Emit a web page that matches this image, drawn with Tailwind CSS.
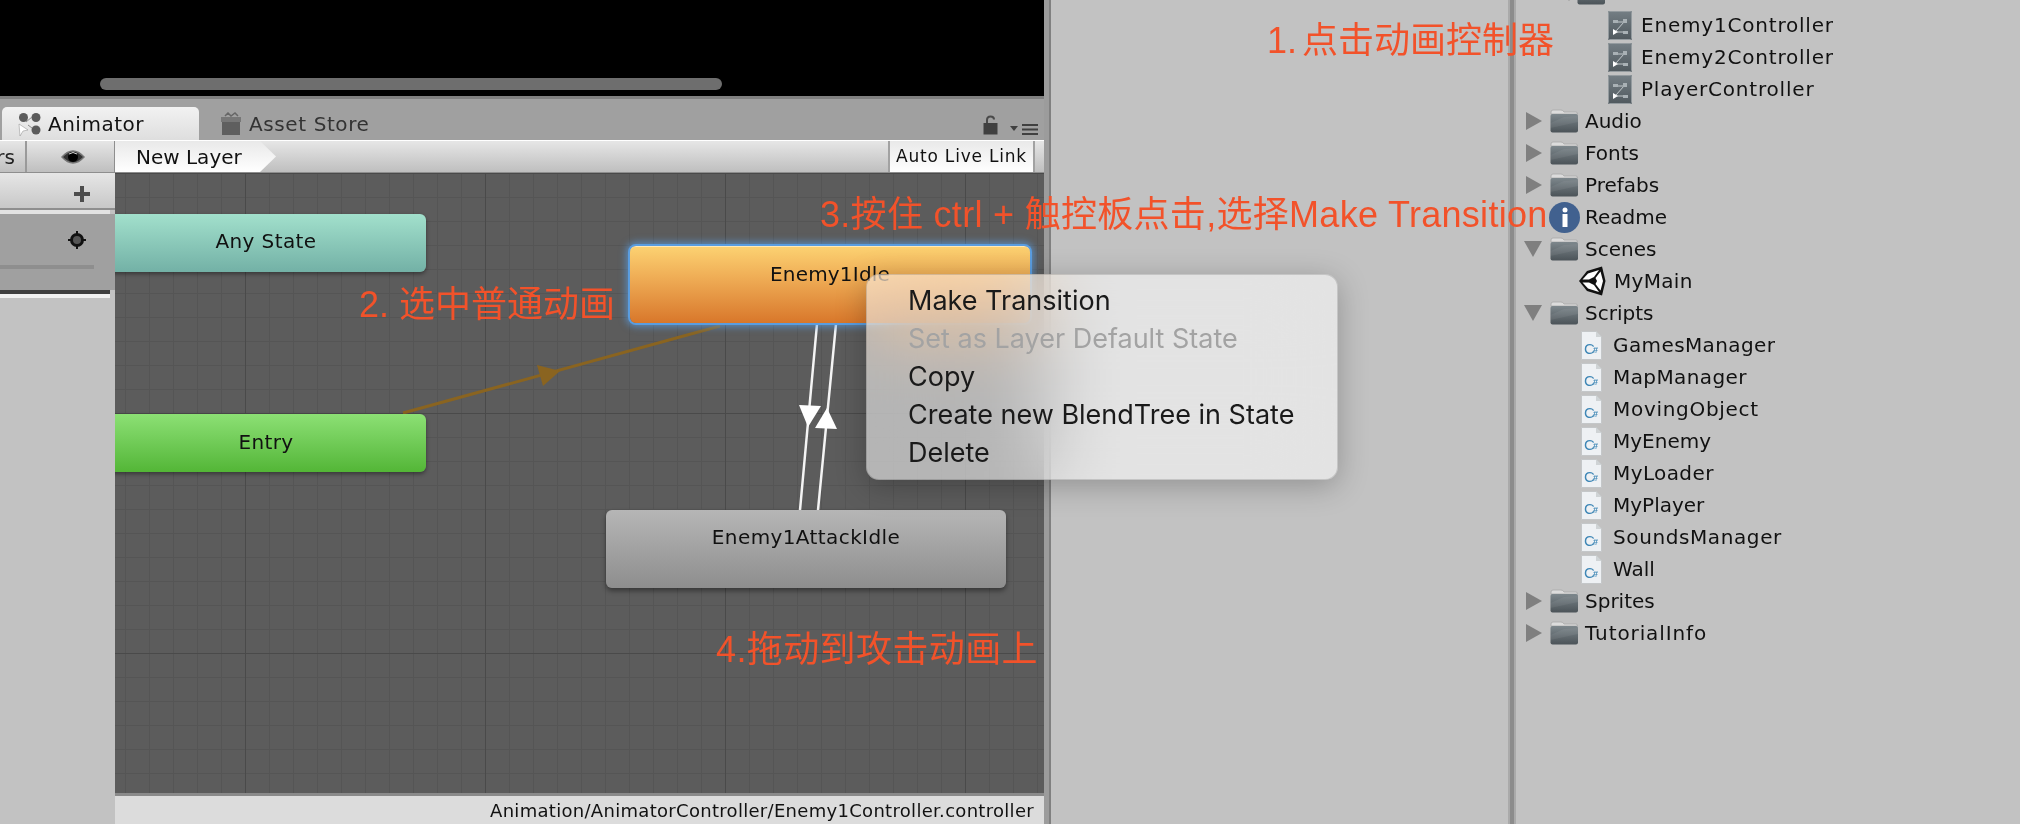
<!DOCTYPE html>
<html lang="en">
<head>
    <meta charset="utf-8">
    <script src="https://cdn.jsdelivr.net/npm/@tailwindcss/browser@4"></script>
    <title>Animator</title>
</head>
<body class="bg-[#c2c2c2]">

<svg class="absolute h-0 w-0">
    <defs>
        <linearGradient id="folderFill" x1="0" y1="0" x2="0" y2="1">
            <stop offset="0" stop-color="#7d878c"/>
            <stop offset="1" stop-color="#4b5358"/>
        </linearGradient>
        <linearGradient id="ctrlFill" x1="0" y1="0" x2="0" y2="1">
            <stop offset="0" stop-color="#747e84"/>
            <stop offset="1" stop-color="#50595e"/>
        </linearGradient>
    </defs>
    <symbol id="folder" viewBox="0 0 28 24">
        <path d="M1 5 L1 3 Q1 1 3 1 L11 1 Q13 1 14 3 L26 3 Q27.500 3 27.500 5 L1 5Z" fill="#dcdcdc" stroke="#a8a8a8" stroke-width="0.800"/>
        <rect x="0.500" y="5" width="27.500" height="18.500" rx="2" fill="url(#folderFill)"/>
        <path d="M0.500 14 L14 8 L28 7 L28 13 L0.500 19Z" fill="#ffffff" fill-opacity="0.060"/>
    </symbol>
    <symbol id="controller" viewBox="0 0 24 29">
        <rect x="0" y="0" width="24" height="29" rx="1" fill="url(#ctrlFill)"/>
        <rect x="0.500" y="0.500" width="23" height="28" rx="1" fill="none" stroke="#949b9f"/>
        <path d="M9 11 H16 M16 11 L8 20 M9 21 H16" stroke="#c4cacd" stroke-width="1"/>
        <rect x="5" y="9" width="5" height="3" fill="#a9b1b5"/>
        <rect x="15" y="8" width="4" height="4" fill="#a9b1b5"/>
        <rect x="15" y="20" width="5" height="3" fill="#a9b1b5"/>
        <path d="M5 18 L10 21 L5 24Z" fill="#ffffff"/>
    </symbol>
    <symbol id="paper" viewBox="0 0 21 29">
        <path d="M0.500 0.500 H15 L20.500 6 V28.500 H0.500Z" fill="#eef1f4" stroke="#c4c7c9"/>
        <path d="M15 0.500 L20.500 6 H15Z" fill="#cfd3d5"/>
    </symbol>
    <symbol id="arrowRight" viewBox="0 0 16 18">
        <path d="M0 0 L16 9 L0 18Z" fill="#7f7f7f"/>
    </symbol>
    <symbol id="arrowDown" viewBox="0 0 18 16">
        <path d="M0 0 H18 L9 16Z" fill="#7f7f7f"/>
    </symbol>
</svg>

<div class="relative flex h-[824px] w-[2020px] overflow-hidden bg-[#c2c2c2] font-['DejaVu_Sans',sans-serif] text-[#111]">

    <!-- animator window -->
    <div class="flex w-[1044px] shrink-0 flex-col">
        <div class="h-[96px] bg-black pl-[100px] pt-[78px]">
            <div class="h-[12px] w-[622px] rounded-full bg-[#6e6e6e]"></div>
        </div>

        <div class="flex h-[44px] items-end border-t-[3px] border-[#808080] bg-[#a0a0a0] pl-[2px]">
            <div class="flex h-[33px] w-[197px] items-center gap-[6px] rounded-t-[5px] bg-linear-to-b from-[#f2f2f2] to-[#dedede] pl-[16px] text-[20px] tracking-[0.5px]">
                <svg class="h-[24px] w-[24px]" viewBox="0 0 24 24">
                    <circle cx="5.500" cy="5.500" r="4.500" fill="#5b5b5b"/>
                    <circle cx="18" cy="5.500" r="4.500" fill="#5b5b5b"/>
                    <circle cx="18" cy="18" r="4.500" fill="#5b5b5b"/>
                    <path d="M1 12 L10 18 L5 19 L2 24Z" fill="#ffffff" stroke="#8a8a8a" stroke-width="0.500"/>
                    <path d="M8 10 L14 5 M10 13 L14 16" stroke="#8a8a8a" stroke-width="1"/>
                </svg>
                <span>Animator</span>
            </div>
            <div class="ml-[21px] flex h-[33px] items-center gap-[7px] text-[20px] tracking-[0.6px] text-[#333]">
                <svg class="h-[24px] w-[22px]" viewBox="0 0 22 24">
                    <path d="M5 4 L8 1 L11 4 L15 1 L18 4" fill="none" stroke="#666" stroke-width="1.500"/>
                    <rect x="1" y="5" width="20" height="5" fill="#777"/>
                    <rect x="2" y="10" width="18" height="13" fill="#5f5f5f"/>
                </svg>
                <span>Asset Store</span>
            </div>
            <div class="ml-auto mr-[6px] flex h-[40px] items-end gap-[12px] pb-[5px]">
                <svg class="h-[20px] w-[15px]" viewBox="0 0 15 20">
                    <path d="M4 8 V5 Q4 1.500 7.500 1.500 Q11 1.500 11 4.500" fill="none" stroke="#4a4a4a" stroke-width="2"/>
                    <rect x="0.500" y="8" width="14" height="11.500" fill="#404040"/>
                </svg>
                <svg class="h-[11px] w-[28px]" viewBox="0 0 28 11">
                    <path d="M0 2 H8 L4 7Z" fill="#404040"/>
                    <path d="M12 1 H28 M12 5.500 H28 M12 10 H28" stroke="#404040" stroke-width="2"/>
                </svg>
            </div>
        </div>

        <div class="flex h-[33px] items-stretch border-y-[1px] border-t-white border-b-[#8e8e8e] bg-linear-to-b from-[#e6e6e6] to-[#bfbfbf] text-[20px]">
            <div class="flex w-[115px] shrink-0 items-center overflow-hidden border-r border-[#8e8e8e]">
                <div class="flex h-full w-[27px] items-center justify-end border-r-2 border-[#9a9a9a] pr-[10px] text-[20px] text-[#222]">rs</div>
                <svg class="ml-[34px] h-[18px] w-[24px]" viewBox="0 0 24 18">
                    <path d="M1 9 Q12 -3 23 9 Q12 21 1 9Z" fill="#333" stroke="#777" stroke-width="1.500"/>
                    <circle cx="12" cy="9" r="5" fill="#000"/>
                    <path d="M8 6 Q12 3 16 6" fill="none" stroke="#ddd" stroke-width="1"/>
                </svg>
            </div>
            <div class="flex w-[161px] items-center bg-linear-to-b from-[#e9e9e9] to-white pl-[21px] [clip-path:polygon(0_0,145px_0,161px_50%,145px_100%,0_100%)]">New Layer</div>
            <div class="ml-auto mr-[9px] flex w-[147px] items-center justify-center border-x-2 border-[#a2a2a2] bg-linear-to-b from-[#e9e9e9] to-white text-[17px] tracking-[0.8px]">Auto Live Link</div>
        </div>

        <div class="flex min-h-0 flex-1">
            <div class="flex w-[115px] shrink-0 flex-col">
                <div class="flex h-[37px] items-center justify-end border-b-2 border-[#8f8f8f] bg-linear-to-b from-[#e6e6e6] to-[#c8c8c8] pr-[25px] pt-[7px]">
                    <svg class="h-[16px] w-[16px]" viewBox="0 0 16 16"><path d="M6 0 H10 V6 H16 V10 H10 V16 H6 V10 H0 V6 H6Z" fill="#4d4d4d"/></svg>
                </div>
                <div class="h-[4px] w-[110px] bg-[#e2e2e2]"></div>
                <div class="h-[76px] bg-[#a0a0a0] pr-[5px]">
                    <div class="flex justify-end pr-[24px] pt-[17px]">
                        <svg class="h-[18px] w-[18px]" viewBox="0 0 18 18">
                            <path d="M9 0 V18 M0 9 H18" stroke="#111" stroke-width="2"/>
                            <circle cx="9" cy="9" r="5.500" fill="#555" stroke="#111" stroke-width="3"/>
                        </svg>
                    </div>
                    <div class="mt-[16px] h-[4px] w-[94px] bg-[#8e8e8e]"></div>
                </div>
                <div class="h-[4px] w-[110px] bg-[#3e3e3e]"></div>
                <div class="h-[4px] w-[110px] bg-[#f0f0f0]"></div>
                <div class="flex-1 bg-[#c2c2c2]"></div>
            </div>

            <div class="flex min-w-0 flex-1 flex-col">
                <!-- state machine graph -->
                <div class="relative flex-1 overflow-hidden bg-[#5c5c5c] bg-[linear-gradient(90deg,#4a4a4a_1px,transparent_1px),linear-gradient(#4a4a4a_1px,transparent_1px),linear-gradient(90deg,#555555_1px,transparent_1px),linear-gradient(#555555_1px,transparent_1px)] bg-[size:240px_240px,240px_240px,24px_24px,24px_24px] bg-[position:130px_0,0_240px,10px_0,0_24px]">
                    <svg class="absolute left-0 top-0 h-[620px] w-[929px]" viewBox="115 173 929 620">
                        <path d="M403 413 L720 326" stroke="#8a6420" stroke-width="3"/>
                        <path d="M537 365 L543 386 L560 371Z" fill="#8a6420"/>
                        <path d="M817 324 L800 510 M836 324 L818 510" stroke="#f4f4f4" stroke-width="2.500"/>
                        <path d="M799 405 L821 406 L808 427Z" fill="#fff"/>
                        <path d="M827 408 L815 428 L837 429Z" fill="#fff"/>
                    </svg>
                    <div class="absolute left-[-9px] top-[41px] h-[58px] w-[320px] rounded-[6px] bg-linear-to-b from-[#a2e0cc] to-[#73b1a6] pt-[17px] text-center text-[20px] leading-[20px] tracking-[0.4px] shadow-[0_2px_4px_#00000066]">Any State</div>
                    <div class="absolute left-[-9px] top-[241px] h-[58px] w-[320px] rounded-[6px] bg-linear-to-b from-[#8ce074] to-[#53b636] pt-[18px] text-center text-[20px] leading-[20px] tracking-[0.4px] shadow-[0_2px_4px_#00000066]">Entry</div>
                    <div class="absolute left-[515px] top-[73px] h-[77px] w-[400px] rounded-[6px] border-t border-[#ffe9b8] bg-linear-to-b from-[#fcd171] to-[#d8772a] pt-[17px] text-center text-[20px] leading-[20px] tracking-[0.2px] shadow-[0_0_0_2px_#5a9de0,0_0_7px_4px_#5a9de0b0]">Enemy1Idle</div>
                    <div class="absolute left-[491px] top-[337px] h-[78px] w-[400px] rounded-[6px] bg-linear-to-b from-[#b6b6b6] to-[#8e8e8e] pt-[17px] text-center text-[20px] leading-[20px] tracking-[0.4px] shadow-[0_3px_5px_#00000066]">Enemy1AttackIdle</div>
                </div>
                <div class="flex h-[31px] items-center justify-end border-t-[3px] border-[#8a8a8a] bg-[#dcdcdc] pr-[10px] text-[18px] tracking-[0.3px]">Animation/AnimatorController/Enemy1Controller.controller</div>
            </div>
        </div>
    </div>

    <div class="w-[7px] shrink-0 border-r-2 border-[#808080] bg-[#9c9c9c]"></div>

    <!-- empty inspector panel -->
    <div class="w-[457px] shrink-0 bg-[#c2c2c2]"></div>
    <div class="w-[8px] shrink-0 border-x-2 border-[#aaa] bg-[#8c8c8c]"></div>

    <!-- project tree -->
    <div class="min-w-0 flex-1 text-[20px]">
        <div class="-mt-[23px]">
            <div class="flex h-[32px] items-center pl-[44px]"><svg class="h-[16px] w-[18px]"><use href="#arrowDown"/></svg><svg class="ml-[-1px] mr-[5px] h-[24px] w-[28px]"><use href="#folder"/></svg><span>AnimatorController</span></div>
            <div class="flex h-[32px] items-center gap-[9px] pl-[92px] tracking-[0.8px]"><svg class="h-[29px] w-[24px]"><use href="#controller"/></svg><span>Enemy1Controller</span></div>
            <div class="flex h-[32px] items-center gap-[9px] pl-[92px] tracking-[0.8px]"><svg class="h-[29px] w-[24px]"><use href="#controller"/></svg><span>Enemy2Controller</span></div>
            <div class="flex h-[32px] items-center gap-[9px] pl-[92px] tracking-[0.8px]"><svg class="h-[29px] w-[24px]"><use href="#controller"/></svg><span>PlayerController</span></div>

            <div class="flex h-[32px] items-center pl-[10px]"><svg class="mr-[8px] h-[18px] w-[16px]"><use href="#arrowRight"/></svg><svg class="mr-[7px] h-[24px] w-[28px]"><use href="#folder"/></svg><span>Audio</span></div>
            <div class="flex h-[32px] items-center pl-[10px]"><svg class="mr-[8px] h-[18px] w-[16px]"><use href="#arrowRight"/></svg><svg class="mr-[7px] h-[24px] w-[28px]"><use href="#folder"/></svg><span>Fonts</span></div>
            <div class="flex h-[32px] items-center pl-[10px]"><svg class="mr-[8px] h-[18px] w-[16px]"><use href="#arrowRight"/></svg><svg class="mr-[7px] h-[24px] w-[28px]"><use href="#folder"/></svg><span>Prefabs</span></div>
            <div class="flex h-[32px] items-center pl-[33px]"><div class="mr-[5px] flex h-[31px] w-[31px] items-center justify-center rounded-full bg-[#41618f]"><svg class="h-[20px] w-[6px]" viewBox="0 0 6 20"><circle cx="3" cy="3" r="2.500" fill="#fff"/><rect x="0.500" y="7" width="5" height="13" fill="#fff"/></svg></div><span>Readme</span></div>
            <div class="flex h-[32px] items-center pl-[8px]"><svg class="mr-[8px] h-[16px] w-[18px]"><use href="#arrowDown"/></svg><svg class="mr-[7px] h-[24px] w-[28px]"><use href="#folder"/></svg><span>Scenes</span></div>
            <div class="flex h-[32px] items-center pl-[62px]">
                <svg class="mr-[8px] h-[30px] w-[28px]" viewBox="0 0 28 30">
                    <path d="M1 15 L9 5 L24 0.500 L27.500 15 L24 29.500 L9 25Z" fill="#111"/>
                    <path d="M4.500 13.500 L10 7.500 L21 4 L16 11 L11 13.500Z" fill="#fff"/>
                    <path d="M17.500 12 L22.500 5.500 L25 15 L22.500 24.500 L17.500 18 L19 15Z" fill="#fff"/>
                    <path d="M4.500 16.500 L11 16.500 L16 19 L21 26 L10 22.500Z" fill="#fff"/>
                </svg>
                <span class="tracking-[0.3px]">MyMain</span>
            </div>
            <div class="flex h-[32px] items-center pl-[8px]"><svg class="mr-[8px] h-[16px] w-[18px]"><use href="#arrowDown"/></svg><svg class="mr-[7px] h-[24px] w-[28px]"><use href="#folder"/></svg><span>Scripts</span></div>

            <div class="flex h-[32px] items-center gap-[11px] pl-[65px] tracking-[0.4px]"><svg class="h-[29px] w-[21px]" viewBox="0 0 21 29"><use href="#paper" width="21" height="29"/><text x="3" y="23" font-family="Liberation Sans" font-size="15" fill="#3f87b6">C</text><text x="12" y="22" font-family="Liberation Sans" font-size="9" font-weight="700" fill="#3f87b6">#</text></svg><span>GamesManager</span></div>
            <div class="flex h-[32px] items-center gap-[11px] pl-[65px] tracking-[0.4px]"><svg class="h-[29px] w-[21px]" viewBox="0 0 21 29"><use href="#paper" width="21" height="29"/><text x="3" y="23" font-family="Liberation Sans" font-size="15" fill="#3f87b6">C</text><text x="12" y="22" font-family="Liberation Sans" font-size="9" font-weight="700" fill="#3f87b6">#</text></svg><span>MapManager</span></div>
            <div class="flex h-[32px] items-center gap-[11px] pl-[65px] tracking-[0.7px]"><svg class="h-[29px] w-[21px]" viewBox="0 0 21 29"><use href="#paper" width="21" height="29"/><text x="3" y="23" font-family="Liberation Sans" font-size="15" fill="#3f87b6">C</text><text x="12" y="22" font-family="Liberation Sans" font-size="9" font-weight="700" fill="#3f87b6">#</text></svg><span>MovingObject</span></div>
            <div class="flex h-[32px] items-center gap-[11px] pl-[65px]"><svg class="h-[29px] w-[21px]" viewBox="0 0 21 29"><use href="#paper" width="21" height="29"/><text x="3" y="23" font-family="Liberation Sans" font-size="15" fill="#3f87b6">C</text><text x="12" y="22" font-family="Liberation Sans" font-size="9" font-weight="700" fill="#3f87b6">#</text></svg><span>MyEnemy</span></div>
            <div class="flex h-[32px] items-center gap-[11px] pl-[65px] tracking-[0.4px]"><svg class="h-[29px] w-[21px]" viewBox="0 0 21 29"><use href="#paper" width="21" height="29"/><text x="3" y="23" font-family="Liberation Sans" font-size="15" fill="#3f87b6">C</text><text x="12" y="22" font-family="Liberation Sans" font-size="9" font-weight="700" fill="#3f87b6">#</text></svg><span>MyLoader</span></div>
            <div class="flex h-[32px] items-center gap-[11px] pl-[65px]"><svg class="h-[29px] w-[21px]" viewBox="0 0 21 29"><use href="#paper" width="21" height="29"/><text x="3" y="23" font-family="Liberation Sans" font-size="15" fill="#3f87b6">C</text><text x="12" y="22" font-family="Liberation Sans" font-size="9" font-weight="700" fill="#3f87b6">#</text></svg><span>MyPlayer</span></div>
            <div class="flex h-[32px] items-center gap-[11px] pl-[65px] tracking-[0.6px]"><svg class="h-[29px] w-[21px]" viewBox="0 0 21 29"><use href="#paper" width="21" height="29"/><text x="3" y="23" font-family="Liberation Sans" font-size="15" fill="#3f87b6">C</text><text x="12" y="22" font-family="Liberation Sans" font-size="9" font-weight="700" fill="#3f87b6">#</text></svg><span>SoundsManager</span></div>
            <div class="flex h-[32px] items-center gap-[11px] pl-[65px]"><svg class="h-[29px] w-[21px]" viewBox="0 0 21 29"><use href="#paper" width="21" height="29"/><text x="3" y="23" font-family="Liberation Sans" font-size="15" fill="#3f87b6">C</text><text x="12" y="22" font-family="Liberation Sans" font-size="9" font-weight="700" fill="#3f87b6">#</text></svg><span>Wall</span></div>

            <div class="flex h-[32px] items-center pl-[10px]"><svg class="mr-[8px] h-[18px] w-[16px]"><use href="#arrowRight"/></svg><svg class="mr-[7px] h-[24px] w-[28px]"><use href="#folder"/></svg><span>Sprites</span></div>
            <div class="flex h-[32px] items-center pl-[10px] tracking-[0.9px]"><svg class="mr-[8px] h-[18px] w-[16px]"><use href="#arrowRight"/></svg><svg class="mr-[7px] h-[24px] w-[28px]"><use href="#folder"/></svg><span>TutorialInfo</span></div>
        </div>
    </div>

    <!-- context menu -->
    <div class="absolute left-[866px] top-[274px] h-[206px] w-[472px] rounded-[13px] border border-[#00000022] bg-white/55 pl-[41px] pt-[7px] font-['Inter',sans-serif] text-[27px] leading-[38px] text-[#1a1a1a] shadow-[0_6px_30px_#00000040] backdrop-blur-2xl backdrop-saturate-150">
        <div>Make Transition</div>
        <div class="text-[#a3a3a3]">Set as Layer Default State</div>
        <div>Copy</div>
        <div>Create new BlendTree in State</div>
        <div>Delete</div>
    </div>

    <!-- annotations -->
    <div class="absolute left-[1267px] top-[19px] font-['Liberation_Sans','Noto_Sans_CJK_SC',sans-serif] text-[36px] leading-[44px] text-[#f2522a] [word-spacing:-5px]">1. 点击动画控制器</div>
    <div class="absolute left-[359px] top-[283px] font-['Liberation_Sans','Noto_Sans_CJK_SC',sans-serif] text-[36px] leading-[44px] text-[#f2522a]">2. 选中普通动画</div>
    <div class="absolute left-[820px] top-[193px] whitespace-nowrap font-['Liberation_Sans','Noto_Sans_CJK_SC',sans-serif] text-[36px] leading-[44px] tracking-[0.3px] text-[#f2522a]">3.按住 ctrl + 触控板点击,选择Make Transition</div>
    <div class="absolute left-[716px] top-[628px] font-['Liberation_Sans','Noto_Sans_CJK_SC',sans-serif] text-[36px] leading-[44px] tracking-[0.4px] text-[#f2522a]">4.拖动到攻击动画上</div>
</div>
</body>
</html>
